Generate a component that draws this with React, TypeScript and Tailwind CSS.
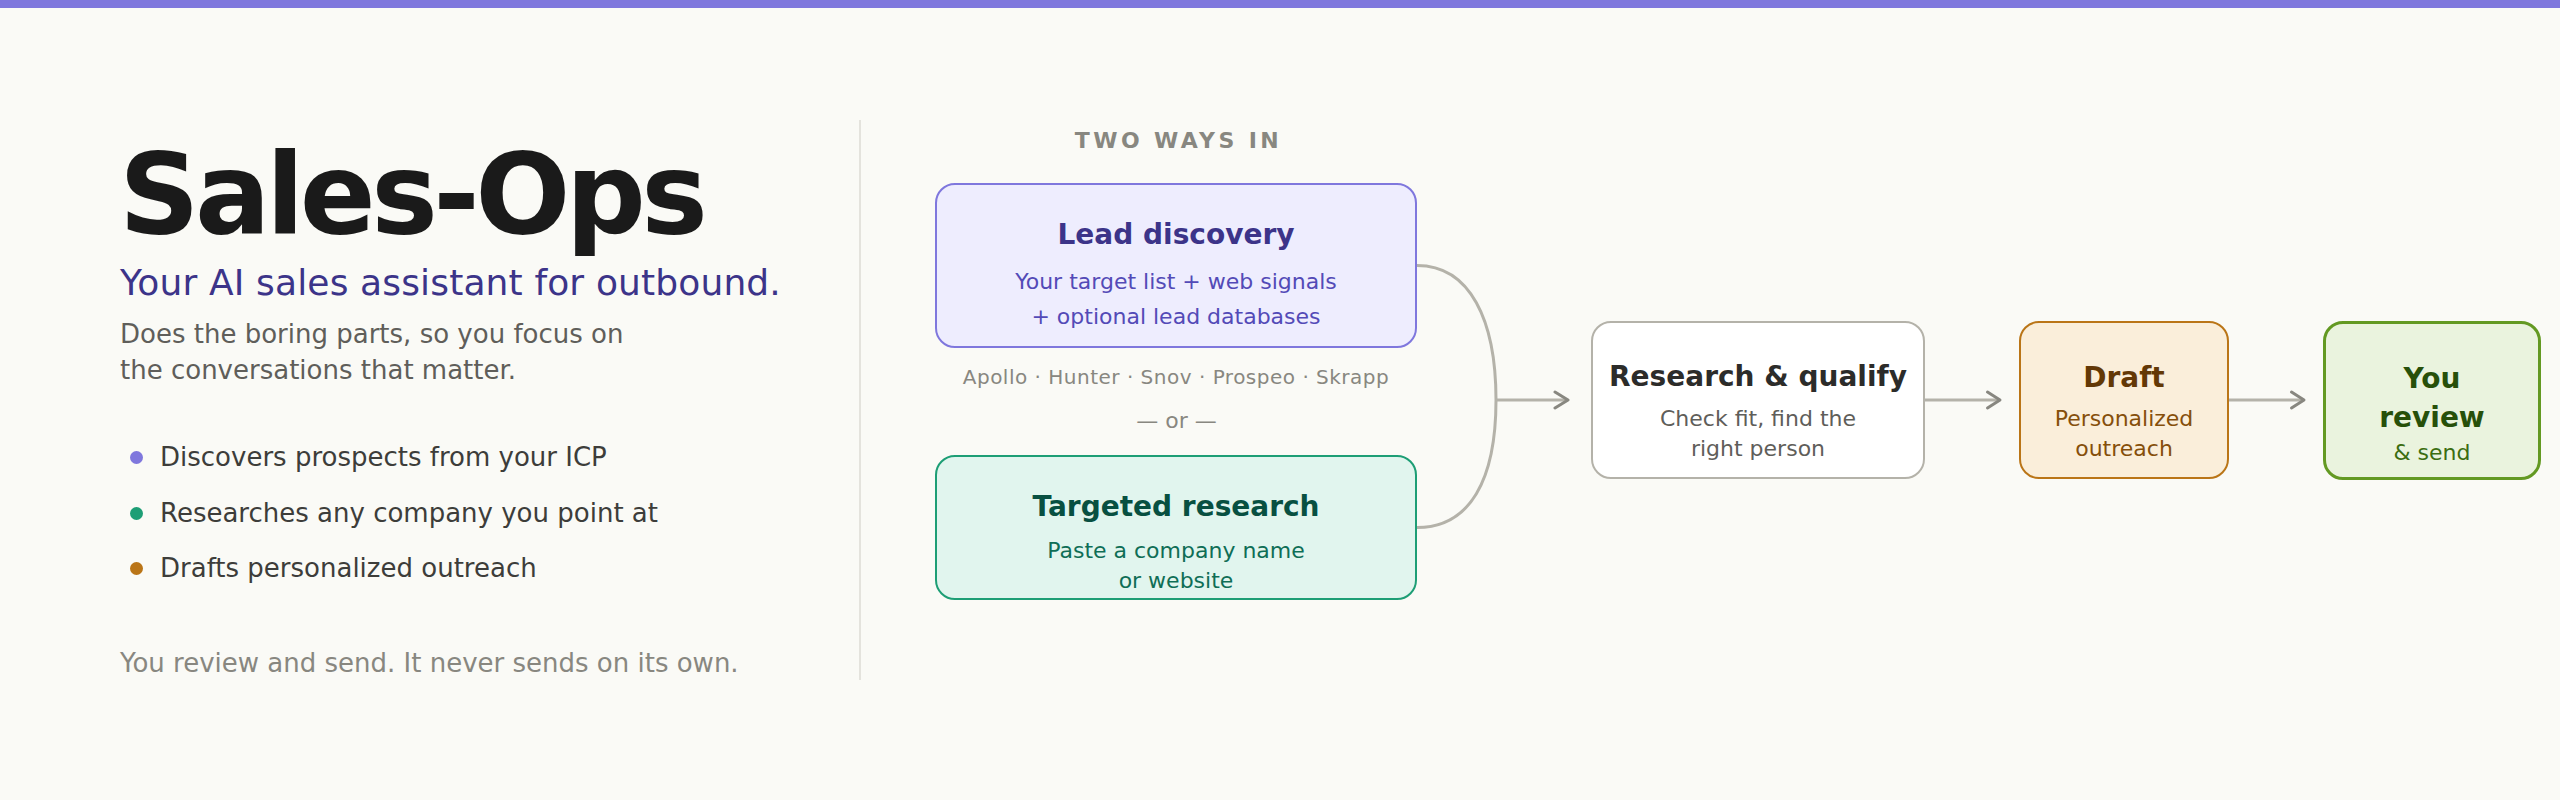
import React from "react";

function Arrow() {
  return (
    <svg width="78" height="24" viewBox="0 0 78 24" className="shrink-0" fill="none">
      <path d="M0 12H74" stroke="#b4b2a9" strokeWidth="3" />
      <path d="M62.5 4L75 12L62.5 20" stroke="#888780" strokeWidth="3" strokeLinecap="round" strokeLinejoin="round" />
    </svg>
  );
}

function Connector() {
  return (
    <svg width="153" height="560" viewBox="0 0 153 560" className="shrink-0" fill="none">
      <path d="M0 145.5C53 145.5 79 200 79 280C79 360 53 407.5 0 407.5" stroke="#b4b2a9" strokeWidth="3" />
      <path d="M79 280H149" stroke="#b4b2a9" strokeWidth="3" />
      <path d="M138 272L151 280L138 288" stroke="#888780" strokeWidth="3" strokeLinecap="round" strokeLinejoin="round" />
    </svg>
  );
}

function Bullet({ color, children }: { color: string; children: React.ReactNode }) {
  return (
    <li className="flex items-center h-[55.5px]">
      <span className={`w-[13px] h-[13px] rounded-full ml-[10px] mr-[17px] shrink-0 ${color}`} />
      <span>{children}</span>
    </li>
  );
}

export default function App() {
  return (
    <div className="w-[2560px] h-[800px] bg-[#fafaf6] overflow-hidden font-['DejaVu_Sans',sans-serif]">
      <div className="h-2 bg-[#7f77dd]" />
      <div className="flex h-[792px] pt-[112px]">
        <div className="w-[741px] ml-[120px] h-[560px] border-r-2 border-[#e4e3dd] shrink-0 flex flex-col">
          <h1 className="text-[112px] leading-[120px] font-bold tracking-[-4.6px] text-[#1a1a1a] mt-[14px] -ml-[1px]">Sales-Ops</h1>
          <p className="text-[36px] leading-[44px] tracking-[0.14px] text-[#3c3489] mt-[7px]">Your AI sales assistant for outbound.</p>
          <p className="text-[26px] leading-[36px] text-[#5f5e5a] mt-[11px]">
            Does the boring parts, so you focus on
            <br />
            the conversations that matter.
          </p>
          <ul className="text-[26px] text-[#3d3d3a] mt-[42px]">
            <Bullet color="bg-[#7f77dd]">Discovers prospects from your ICP</Bullet>
            <Bullet color="bg-[#1d9e75]">Researches any company you point at</Bullet>
            <Bullet color="bg-[#ba7517]">Drafts personalized outreach</Bullet>
          </ul>
          <p className="text-[26px] leading-[36px] text-[#888780] mt-[48px]">You review and send. It never sends on its own.</p>
        </div>
        <div className="flex items-center h-[560px] ml-[74px]">
          <div className="w-[482px] self-start flex flex-col items-stretch text-center">
            <div className="text-[22px] leading-[28px] font-bold tracking-[3.4px] text-[#888780] mt-[7px] pl-[5px]">TWO WAYS IN</div>
            <div className="h-[165px] mt-[28px] rounded-[20px] border-2 border-[#7f77dd] bg-[#eeedfe] flex flex-col items-center pt-[32px]">
              <div className="text-[28px] leading-[36px] font-bold text-[#3c3489]">Lead discovery</div>
              <div className="text-[22px] leading-[35px] text-[#534ab7] mt-[11px]">
                Your target list + web signals
                <br />
                + optional lead databases
              </div>
            </div>
            <div className="text-[20px] leading-[28px] tracking-[0.5px] text-[#888780] mt-[15px]">Apollo · Hunter · Snov · Prospeo · Skrapp</div>
            <div className="text-[22px] leading-[28px] text-[#888780] mt-[16px] pl-[1px]">— or —</div>
            <div className="h-[145px] mt-[20px] rounded-[20px] border-2 border-[#1d9e75] bg-[#e1f5ee] flex flex-col items-center pt-[32px]">
              <div className="text-[28px] leading-[36px] font-bold text-[#085041]">Targeted research</div>
              <div className="text-[22px] leading-[30px] text-[#0f6e56] mt-[11px]">
                Paste a company name
                <br />
                or website
              </div>
            </div>
          </div>
          <Connector />
          <div className="w-[334px] h-[158px] ml-[21px] shrink-0 rounded-[20px] border-2 border-[#b4b2a9] bg-white flex flex-col items-center pt-[35px] text-center">
            <div className="text-[28px] leading-[38px] font-bold text-[#2c2c2a]">Research &amp; qualify</div>
            <div className="text-[22px] leading-[30px] text-[#5f5e5a] mt-[8px]">
              Check fit, find the
              <br />
              right person
            </div>
          </div>
          <Arrow />
          <div className="w-[210px] h-[158px] ml-[16px] shrink-0 rounded-[20px] border-2 border-[#ba7517] bg-[#faeeda] flex flex-col items-center pt-[36px] text-center">
            <div className="text-[28px] leading-[38px] font-bold text-[#633806]">Draft</div>
            <div className="text-[22px] leading-[30px] text-[#854f0b] mt-[7px]">
              Personalized
              <br />
              outreach
            </div>
          </div>
          <Arrow />
          <div className="w-[218px] h-[159px] ml-[16px] shrink-0 rounded-[20px] border-[3px] border-[#639922] bg-[#eaf3de] flex flex-col items-center pt-[35px] text-center">
            <div className="text-[28px] leading-[39px] font-bold text-[#27500a]">
              You
              <br />
              review
            </div>
            <div className="text-[22px] leading-[30px] text-[#3b6d11] mt-[1px]">&amp; send</div>
          </div>
        </div>
      </div>
    </div>
  );
}
